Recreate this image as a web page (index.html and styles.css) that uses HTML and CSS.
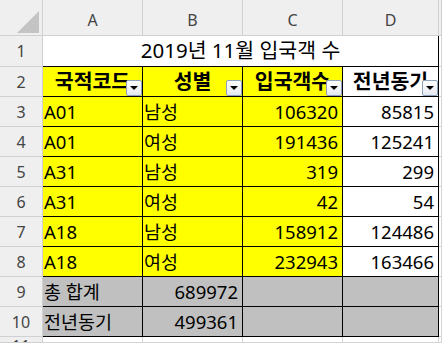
FILE: index.html
```html
<!DOCTYPE html>
<html lang="ko">
<head>
<meta charset="utf-8">
<link rel="stylesheet" href="styles.css">
</head>
<body>
<div class="sheet">
  <div class="c hd corner"><svg width="22" height="22" viewBox="0 0 22 22"><polygon points="22,0 22,22 0,22" fill="#c4c4c4"/></svg></div>
  <div class="c hd col">A</div>
  <div class="c hd col">B</div>
  <div class="c hd col">C</div>
  <div class="c hd col">D</div>
  <div class="c hd col"></div>

  <div class="c hd row">1</div>
  <div class="c b t title">2019년 11월 입국객 수</div>
  <div class="c"></div>

  <div class="c hd row">2</div>
  <div class="c b t th y">국적코드<span class="dd"></span></div>
  <div class="c b t th y">성별<span class="dd"></span></div>
  <div class="c b t th y">입국객수<span class="dd"></span></div>
  <div class="c b t th">전년동기<span class="dd"></span></div>
  <div class="c"></div>

  <div class="c hd row">3</div>
  <div class="c b t y">A01</div>
  <div class="c b t y">남성</div>
  <div class="c b t y num">106320</div>
  <div class="c b t num">85815</div>
  <div class="c"></div>

  <div class="c hd row">4</div>
  <div class="c b t y">A01</div>
  <div class="c b t y">여성</div>
  <div class="c b t y num">191436</div>
  <div class="c b t num">125241</div>
  <div class="c"></div>

  <div class="c hd row">5</div>
  <div class="c b t y">A31</div>
  <div class="c b t y">남성</div>
  <div class="c b t y num">319</div>
  <div class="c b t num">299</div>
  <div class="c"></div>

  <div class="c hd row">6</div>
  <div class="c b t y">A31</div>
  <div class="c b t y">여성</div>
  <div class="c b t y num">42</div>
  <div class="c b t num">54</div>
  <div class="c"></div>

  <div class="c hd row">7</div>
  <div class="c b t y">A18</div>
  <div class="c b t y">남성</div>
  <div class="c b t y num">158912</div>
  <div class="c b t num">124486</div>
  <div class="c"></div>

  <div class="c hd row">8</div>
  <div class="c b t y">A18</div>
  <div class="c b t y">여성</div>
  <div class="c b t y num">232943</div>
  <div class="c b t num">163466</div>
  <div class="c"></div>

  <div class="c hd row">9</div>
  <div class="c b t g">총 합계</div>
  <div class="c b t g num">689972</div>
  <div class="c b t g"></div>
  <div class="c b t g"></div>
  <div class="c"></div>

  <div class="c hd row">10</div>
  <div class="c b t g">전년동기</div>
  <div class="c b t g num">499361</div>
  <div class="c b t g"></div>
  <div class="c b t g"></div>
  <div class="c"></div>

  <div class="c hd row last">11</div>
  <div class="c"></div>
  <div class="c"></div>
  <div class="c"></div>
  <div class="c"></div>
  <div class="c"></div>
</div>
</body>
</html>
```
FILE: styles.css
```css
html, body {
  margin: 0;
  padding: 0;
  background: #ffffff;
}
body {
  width: 442px;
  height: 343px;
  overflow: hidden;
}
.sheet {
  display: grid;
  grid-template-columns: 43px 100px 100px 100px 96px 1fr;
  grid-template-rows: 36px 31px repeat(9, 30px) 1fr;
  width: 442px;
  height: 343px;
  font-family: "Noto Sans", "Noto Sans CJK KR", sans-serif;
}
.c {
  box-sizing: border-box;
  border-right: 1px solid #d4d4d4;
  border-bottom: 1px solid #d4d4d4;
  min-width: 0;
  min-height: 0;
}
.hd {
  background: #efefef;
  color: #444444;
  font-size: 16px;
  display: flex;
  align-items: center;
  justify-content: center;
  border-color: #d0d0d0;
}
.col {
  padding-top: 5px;
}
.last {
  align-items: flex-start;
  padding-top: 1px;
  overflow: hidden;
  line-height: 16px;
}
.corner {
  display: block;
  padding: 11px 3px 0 17px;
}
.corner svg {
  display: block;
}
.b {
  border-right-color: #000000;
  border-bottom-color: #000000;
}
.t {
  font-size: 18.5px;
  line-height: 29px;
  color: #000000;
  padding: 0 4px 0 1px;
  white-space: nowrap;
  overflow: hidden;
}
.title {
  grid-column: 2 / 6;
  text-align: center;
  font-size: 20.5px;
  padding: 0;
}
.th {
  position: relative;
  font-weight: bold;
  font-size: 20.5px;
  text-align: center;
  padding: 0;
  overflow: visible;
}
.num {
  text-align: right;
}
.y {
  background: #ffff00;
}
.g {
  background: #c0c0c0;
}
.dd {
  position: absolute;
  right: 0;
  bottom: 0;
  width: 16px;
  height: 16px;
  box-sizing: border-box;
  border: 1px solid #8fa2bd;
  border-radius: 2px;
  background: linear-gradient(#ffffff, #e4e9f0);
}
.dd::after {
  content: "";
  position: absolute;
  left: 3px;
  top: 5px;
  border-left: 4px solid transparent;
  border-right: 4px solid transparent;
  border-top: 4px solid #000000;
}
```
